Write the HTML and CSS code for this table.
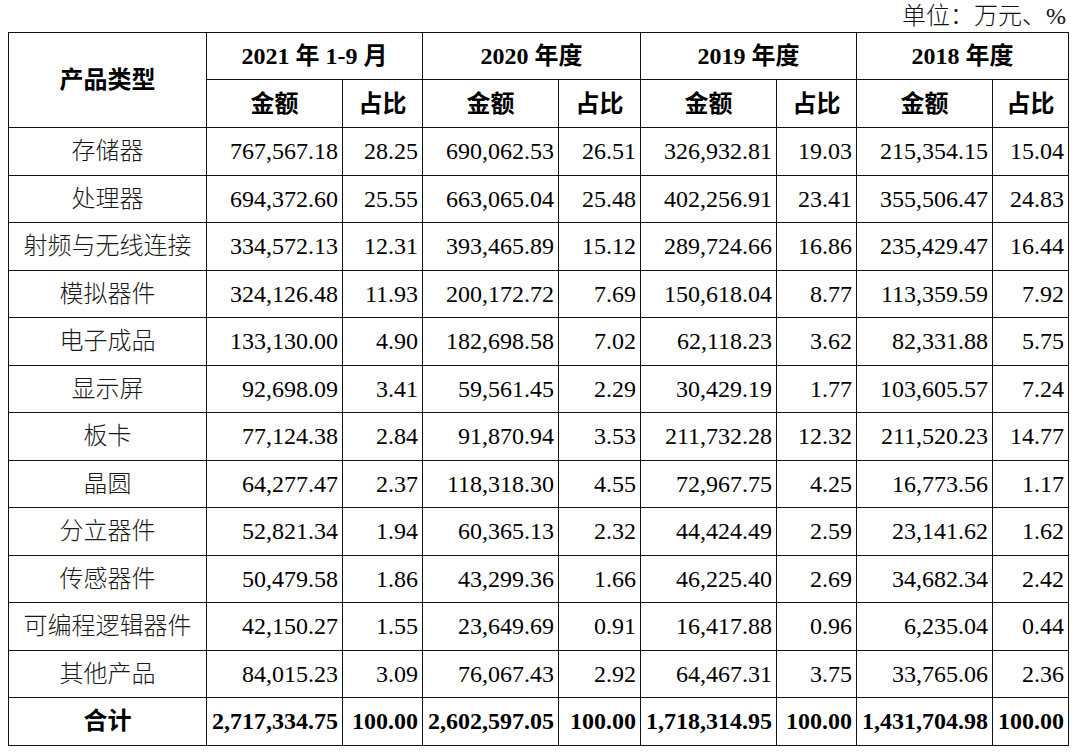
FILE: index.html
```html
<!DOCTYPE html>
<html lang="zh-CN">
<head>
<meta charset="utf-8">
<title>产品类型</title>
<link rel="stylesheet" href="styles.css">
</head>
<body>
<div class="wrap">
  <div class="unit">单位：万元、%</div>
  <table class="tbl">
    <colgroup>
      <col class="c-name">
      <col class="c-amt">
      <col class="c-pct">
      <col class="c-amt">
      <col class="c-pct2">
      <col class="c-amt">
      <col class="c-pct">
      <col class="c-amt">
      <col class="c-pct3">
    </colgroup>
    <thead>
      <tr class="h1">
        <th rowspan="2">产品类型</th>
        <th colspan="2">2021 年 1-9 月</th>
        <th colspan="2">2020 年度</th>
        <th colspan="2">2019 年度</th>
        <th colspan="2">2018 年度</th>
      </tr>
      <tr class="h2">
        <th>金额</th><th>占比</th>
        <th>金额</th><th>占比</th>
        <th>金额</th><th>占比</th>
        <th>金额</th><th>占比</th>
      </tr>
    </thead>
    <tbody>
      <tr><td class="name">存储器</td><td>767,567.18</td><td>28.25</td><td>690,062.53</td><td>26.51</td><td>326,932.81</td><td>19.03</td><td>215,354.15</td><td>15.04</td></tr>
      <tr><td class="name">处理器</td><td>694,372.60</td><td>25.55</td><td>663,065.04</td><td>25.48</td><td>402,256.91</td><td>23.41</td><td>355,506.47</td><td>24.83</td></tr>
      <tr><td class="name">射频与无线连接</td><td>334,572.13</td><td>12.31</td><td>393,465.89</td><td>15.12</td><td>289,724.66</td><td>16.86</td><td>235,429.47</td><td>16.44</td></tr>
      <tr><td class="name">模拟器件</td><td>324,126.48</td><td>11.93</td><td>200,172.72</td><td>7.69</td><td>150,618.04</td><td>8.77</td><td>113,359.59</td><td>7.92</td></tr>
      <tr><td class="name">电子成品</td><td>133,130.00</td><td>4.90</td><td>182,698.58</td><td>7.02</td><td>62,118.23</td><td>3.62</td><td>82,331.88</td><td>5.75</td></tr>
      <tr><td class="name">显示屏</td><td>92,698.09</td><td>3.41</td><td>59,561.45</td><td>2.29</td><td>30,429.19</td><td>1.77</td><td>103,605.57</td><td>7.24</td></tr>
      <tr><td class="name">板卡</td><td>77,124.38</td><td>2.84</td><td>91,870.94</td><td>3.53</td><td>211,732.28</td><td>12.32</td><td>211,520.23</td><td>14.77</td></tr>
      <tr><td class="name">晶圆</td><td>64,277.47</td><td>2.37</td><td>118,318.30</td><td>4.55</td><td>72,967.75</td><td>4.25</td><td>16,773.56</td><td>1.17</td></tr>
      <tr><td class="name">分立器件</td><td>52,821.34</td><td>1.94</td><td>60,365.13</td><td>2.32</td><td>44,424.49</td><td>2.59</td><td>23,141.62</td><td>1.62</td></tr>
      <tr><td class="name">传感器件</td><td>50,479.58</td><td>1.86</td><td>43,299.36</td><td>1.66</td><td>46,225.40</td><td>2.69</td><td>34,682.34</td><td>2.42</td></tr>
      <tr><td class="name">可编程逻辑器件</td><td>42,150.27</td><td>1.55</td><td>23,649.69</td><td>0.91</td><td>16,417.88</td><td>0.96</td><td>6,235.04</td><td>0.44</td></tr>
      <tr><td class="name">其他产品</td><td>84,015.23</td><td>3.09</td><td>76,067.43</td><td>2.92</td><td>64,467.31</td><td>3.75</td><td>33,765.06</td><td>2.36</td></tr>
      <tr class="total"><td class="name">合计</td><td>2,717,334.75</td><td>100.00</td><td>2,602,597.05</td><td>100.00</td><td>1,718,314.95</td><td>100.00</td><td>1,431,704.98</td><td>100.00</td></tr>
    </tbody>
  </table>
</div>
</body>
</html>
```

FILE: styles.css
```css
html, body {
  margin: 0;
  padding: 0;
  background: #ffffff;
}

body {
  font-family: "Liberation Serif", "Noto Sans CJK SC", serif;
  font-size: 24px;
  color: #000000;
}

.wrap {
  width: 1061px;
  margin-left: 8px;
}

.unit {
  height: 32px;
  line-height: 32px;
  text-align: right;
  padding-right: 3px;
  color: #111111;
  font-weight: 300;
}

.tbl {
  border-collapse: collapse;
  table-layout: fixed;
  width: 1061px;
}

.c-name { width: 198px; }
.c-amt { width: 136px; }
.c-pct { width: 80px; }
.c-pct2 { width: 82px; }
.c-pct3 { width: 76px; }

.tbl th,
.tbl td {
  border: 1px solid #111111;
  padding: 0 4px 0 0;
  line-height: 28px;
  white-space: nowrap;
  vertical-align: middle;
}

.tbl th {
  font-weight: bold;
  text-align: center;
  padding: 0;
}

.tbl .h1 th { height: 46px; }
.tbl .h2 th { height: 47px; }

.tbl td {
  text-align: right;
  height: 46.5px;
}

.tbl td.name {
  text-align: center;
  padding: 0;
  font-weight: 300;
  color: #1a1a1a;
}

.tbl .total td.name {
  font-weight: bold;
  color: #000000;
}

.total td {
  font-weight: bold;
}
```
